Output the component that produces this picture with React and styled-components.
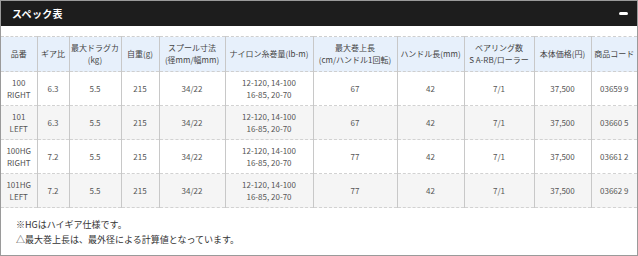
import React from "react";
import styled, { createGlobalStyle } from "styled-components";

const GlobalStyle = createGlobalStyle`
  html, body {
    margin: 0;
    padding: 0;
    background: #fff;
  }
  body {
    font-family: "Noto Sans CJK JP", "Noto Sans", sans-serif;
  }
`;

const columns = [
  { label: ["品番"], width: 36 },
  { label: ["ギア比"], width: 32 },
  { label: ["最大ドラグカ", "(kg)"], width: 52 },
  { label: ["自重(g)"], width: 38 },
  { label: ["スプール寸法", "(径mm/幅mm)"], width: 66 },
  { label: ["ナイロン糸巻量(lb-m)"], width: 88 },
  { label: ["最大巻上長", "(cm/ハンドル1回転)"], width: 84 },
  { label: ["ハンドル長(mm)"], width: 67 },
  { label: ["ベアリング数", "S A-RB/ローラー"], width: 70 },
  { label: ["本体価格(円)"], width: 57 },
  { label: ["商品コード"], width: 46 },
];

const line = ["12-120, 14-100", "16-85, 20-70"];

const rows = [
  [["100", "RIGHT"], "6.3", "5.5", "215", "34/22", line, "67", "42", "7/1", "37,500", "03659 9"],
  [["101", "LEFT"], "6.3", "5.5", "215", "34/22", line, "67", "42", "7/1", "37,500", "03660 5"],
  [["100HG", "RIGHT"], "7.2", "5.5", "215", "34/22", line, "77", "42", "7/1", "37,500", "03661 2"],
  [["101HG", "LEFT"], "7.2", "5.5", "215", "34/22", line, "77", "42", "7/1", "37,500", "03662 9"],
];

const Lines = ({ value }) =>
  Array.isArray(value)
    ? value.map((v, i) => <span key={i}>{v}</span>)
    : value;

const App = () => {
  return (
    <>
      <GlobalStyle />
      <Panel>
        <TitleBar>
          <Title>スペック表</Title>
          <Collapse />
        </TitleBar>
        <Spec>
          <colgroup>
            {columns.map((c, i) => (
              <col key={i} style={{ width: c.width }} />
            ))}
          </colgroup>
          <thead>
            <tr>
              {columns.map((c, i) => (
                <HeadCell key={i}>
                  <Lines value={c.label} />
                </HeadCell>
              ))}
            </tr>
          </thead>
          <tbody>
            {rows.map((r, i) => (
              <Row key={i} $striped={i % 2 === 1}>
                {r.map((v, j) => (
                  <Cell key={j}>
                    <Lines value={v} />
                  </Cell>
                ))}
              </Row>
            ))}
          </tbody>
        </Spec>
        <Notes>
          <p>※HGはハイギア仕様です。</p>
          <p>△最大巻上長は、最外径による計算値となっています。</p>
        </Notes>
      </Panel>
    </>
  );
};
export default App;

const Panel = styled.div`
  width: 638px;
  height: 256px;
  box-sizing: border-box;
  border: 1px solid #9a9a9a;
  background: #fff;
  overflow: hidden;
`;

const TitleBar = styled.div`
  height: 25px;
  background: #1d1d1d;
  display: flex;
  align-items: center;
  justify-content: space-between;
  padding: 0 9px 0 11px;
`;

const Title = styled.h2`
  margin: 0;
  color: #fff;
  font-size: 10px;
  font-weight: 700;
  letter-spacing: 0.3px;
`;

const Collapse = styled.span`
  display: block;
  width: 9px;
  height: 3px;
  border-radius: 1.5px;
  background: #fff;
`;

const Spec = styled.table`
  margin-top: 10px;
  width: 636px;
  table-layout: fixed;
  border-collapse: collapse;
  font-size: 8px;
  color: #555;
  text-align: center;
`;

const HeadCell = styled.th`
  height: 34px;
  padding: 0;
  font-weight: 400;
  line-height: 12px;
  color: #444;
  background: #e7f0fb;
  border-top: 1px dashed #cfcfcf;
  border-bottom: 1px dashed #cfcfcf;
  border-left: 1px solid #c8c8c8;
  &:first-child {
    border-left: none;
  }
  > span {
    display: block;
  }
`;

const Row = styled.tr`
  background: ${(p) => (p.$striped ? "#f5f5f5" : "#fff")};
`;

const Cell = styled.td`
  height: 33px;
  padding: 0;
  line-height: 12px;
  border-bottom: 1px dashed #d2d2d2;
  border-left: 1px solid #c8c8c8;
  &:first-child {
    border-left: none;
  }
  > span {
    display: block;
  }
`;

const Notes = styled.div`
  padding: 9px 15px;
  font-size: 9px;
  line-height: 15px;
  color: #333;
  p {
    margin: 0;
  }
`;
